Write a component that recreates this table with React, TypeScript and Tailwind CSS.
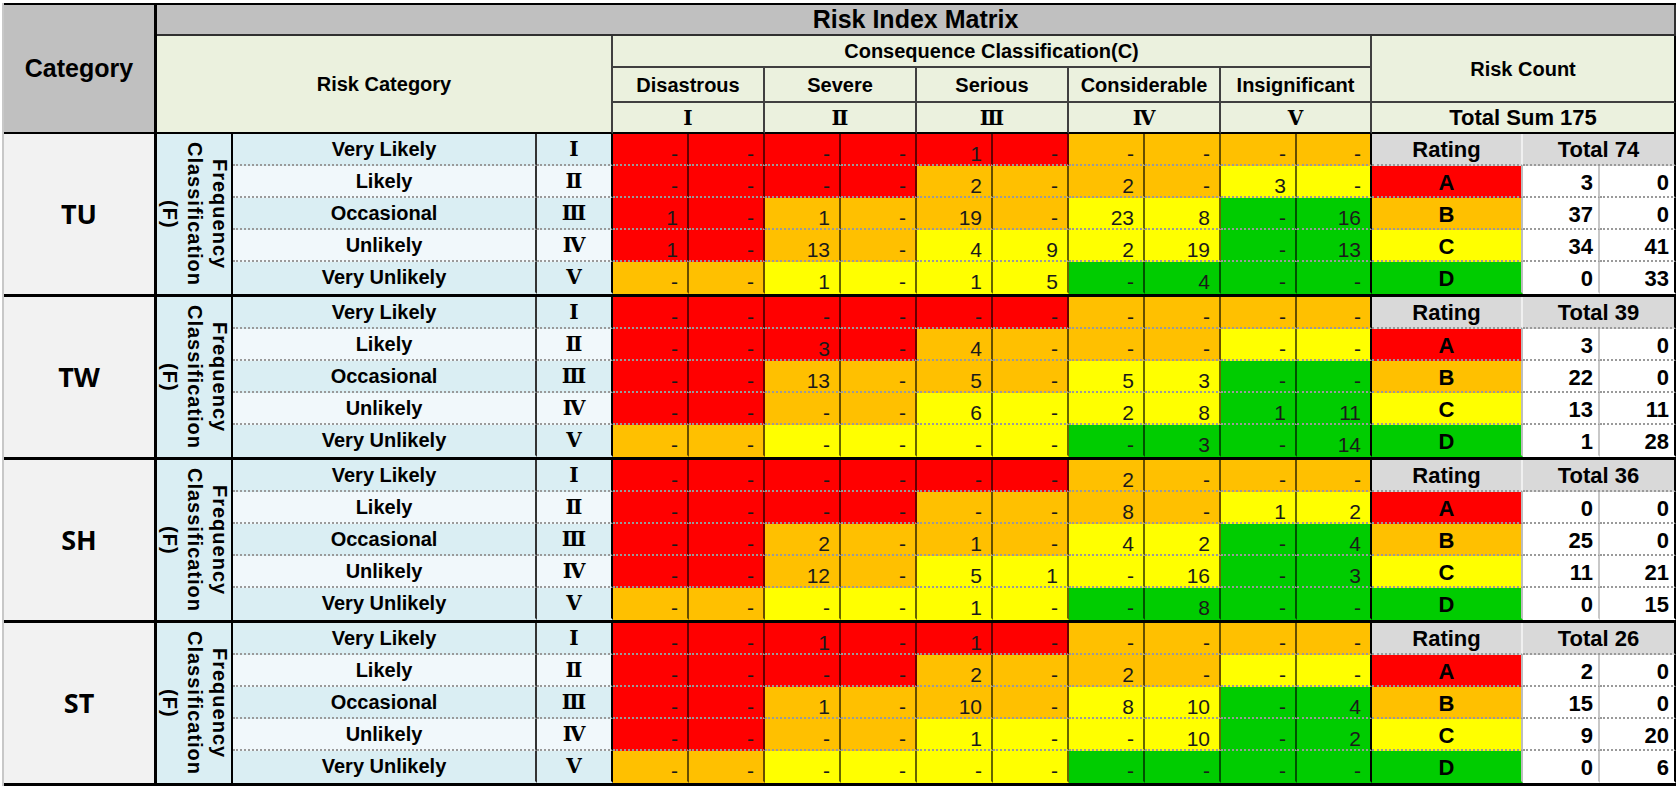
import React from 'react'

const FONT = "font-['Liberation_Sans',Arial,sans-serif]"
const ROMAN_FONT = "font-['DejaVu_Serif','Noto_Sans_CJK_KR',serif]"
const COLS = 'grid-cols-[153px_76px_304px_76px_repeat(9,76px)_75px_151px_77px_76px]'

const SEVERITY = ['Disastrous', 'Severe', 'Serious', 'Considerable', 'Insignificant']
const ROMAN = ['Ⅰ', 'Ⅱ', 'Ⅲ', 'Ⅳ', 'Ⅴ']
const FREQ = ['Very Likely', 'Likely', 'Occasional', 'Unlikely', 'Very Unlikely']

const BG: Record<string, string> = {
  r: 'bg-[#ff0000]',
  o: 'bg-[#ffc000]',
  y: 'bg-[#ffff00]',
  g: 'bg-[#00cc00]',
}

// colour of each matrix cell, same for every section
const PATTERN = ['rrrrrroooo', 'rrrrooooyy', 'rrooooyygg', 'rrooyyyygg', 'ooyyyygggg']
const RATINGS = [
  { label: 'A', bg: 'bg-[#ff0000]' },
  { label: 'B', bg: 'bg-[#ffc000]' },
  { label: 'C', bg: 'bg-[#ffff00]' },
  { label: 'D', bg: 'bg-[#00cc00]' },
]

interface Section {
  name: string
  total: number
  rows: string[][]
  counts: number[][]
}

const SECTIONS: Section[] = [
  {
    name: 'TU',
    total: 74,
    rows: [
      ['-', '-', '-', '-', '1', '-', '-', '-', '-', '-'],
      ['-', '-', '-', '-', '2', '-', '2', '-', '3', '-'],
      ['1', '-', '1', '-', '19', '-', '23', '8', '-', '16'],
      ['1', '-', '13', '-', '4', '9', '2', '19', '-', '13'],
      ['-', '-', '1', '-', '1', '5', '-', '4', '-', '-'],
    ],
    counts: [[3, 0], [37, 0], [34, 41], [0, 33]],
  },
  {
    name: 'TW',
    total: 39,
    rows: [
      ['-', '-', '-', '-', '-', '-', '-', '-', '-', '-'],
      ['-', '-', '3', '-', '4', '-', '-', '-', '-', '-'],
      ['-', '-', '13', '-', '5', '-', '5', '3', '-', '-'],
      ['-', '-', '-', '-', '6', '-', '2', '8', '1', '11'],
      ['-', '-', '-', '-', '-', '-', '-', '3', '-', '14'],
    ],
    counts: [[3, 0], [22, 0], [13, 11], [1, 28]],
  },
  {
    name: 'SH',
    total: 36,
    rows: [
      ['-', '-', '-', '-', '-', '-', '2', '-', '-', '-'],
      ['-', '-', '-', '-', '-', '-', '8', '-', '1', '2'],
      ['-', '-', '2', '-', '1', '-', '4', '2', '-', '4'],
      ['-', '-', '12', '-', '5', '1', '-', '16', '-', '3'],
      ['-', '-', '-', '-', '1', '-', '-', '8', '-', '-'],
    ],
    counts: [[0, 0], [25, 0], [11, 21], [0, 15]],
  },
  {
    name: 'ST',
    total: 26,
    rows: [
      ['-', '-', '1', '-', '1', '-', '-', '-', '-', '-'],
      ['-', '-', '-', '-', '2', '-', '2', '-', '-', '-'],
      ['-', '-', '1', '-', '10', '-', '8', '10', '-', '4'],
      ['-', '-', '-', '-', '1', '-', '-', '10', '-', '2'],
      ['-', '-', '-', '-', '-', '-', '-', '-', '-', '-'],
    ],
    counts: [[2, 0], [15, 0], [9, 20], [0, 6]],
  },
]

function Header() {
  const cell = 'flex items-center justify-center bg-[#ebf1de] border-r-2 border-b-2 border-[#404040] font-bold text-[20px] text-black'
  return (
    <div className={`grid ${COLS} grid-rows-[31px_32px_35px_31px] border-t-2 border-black`}>
      <div className="row-span-4 flex items-center justify-center bg-[#c0c0c0] border-r-[3px] border-b-2 border-black font-bold text-[25px]">
        Category
      </div>
      <div className="col-span-16 flex items-center justify-center bg-[#c0c0c0] border-b-2 border-r-2 border-[#303030] font-bold text-[25px]">
        Risk Index Matrix
      </div>
      <div className={`${cell} col-span-3 row-span-3 border-b-black`}>Risk Category</div>
      <div className={`${cell} col-span-10`}>Consequence Classification(C)</div>
      <div className={`${cell} col-span-3 row-span-2 border-r-black`}>Risk Count</div>
      {SEVERITY.map((s) => (
        <div key={s} className={`${cell} col-span-2`}>{s}</div>
      ))}
      {ROMAN.map((r) => (
        <div key={r} className={`${cell} col-span-2 border-b-black ${ROMAN_FONT} text-[20px]`}>{r}</div>
      ))}
      <div className={`${cell} col-span-3 border-b-black border-r-black text-[22px]`}>Total Sum 175</div>
    </div>
  )
}

function SectionBlock({ section }: { section: Section }) {
  // dotted row rule only on the bottom edge, the side rules stay solid
  const line = (i: number) =>
    i < 4 ? 'border-b-2 [border-bottom-style:dotted] border-b-[#9a9a9a]' : 'border-b-2 border-b-transparent'
  return (
    <div className={`grid ${COLS} grid-rows-[repeat(5,32px)] border-b-[3px] border-black`}>
      <div className="row-span-5 flex items-center justify-center bg-[#f2f2f2] border-r-[3px] border-black font-['Noto_Sans',sans-serif] font-bold text-[27px]">
        {section.name}
      </div>
      <div className="row-span-5 flex items-center justify-center bg-[#daeef3] border-r-2 border-black">
        <div className="[writing-mode:vertical-rl] text-center font-bold text-[20px] leading-[25px] tracking-[1px]">
          Frequency
          <br />
          Classification
          <br />
          (F)
        </div>
      </div>
      {section.rows.map((row, i) => {
        const tint = i % 2 === 0 ? 'bg-[#daeef3]' : 'bg-[#f1f8fb]'
        return (
          <React.Fragment key={i}>
            <div className={`flex items-center justify-center ${tint} border-r-2 border-r-[#333] ${line(i)} font-bold text-[20px]`}>
              {FREQ[i]}
            </div>
            <div className={`flex items-center justify-center ${tint} border-r-2 border-r-black ${line(i)} ${ROMAN_FONT} font-bold text-[20px]`}>
              {ROMAN[i]}
            </div>
            {row.map((v, j) => (
              <div
                key={j}
                className={`flex items-end justify-end pr-[9px] ${BG[PATTERN[i][j]]} border-r-2 ${j === 9 ? 'border-r-black' : 'border-r-black/60'} ${line(i)} text-[21px] leading-none text-[#1a1a1a]`}
              >
                {v}
              </div>
            ))}
            {i === 0 ? (
              <>
                <div className={`flex items-center justify-center bg-[#d9d9d9] border-r-2 border-r-[#f0f0f0] ${line(i)} font-bold text-[22px]`}>
                  Rating
                </div>
                <div className={`col-span-2 flex items-center justify-center bg-[#d9d9d9] border-r-2 border-r-black ${line(i)} font-bold text-[22px]`}>
                  Total {section.total}
                </div>
              </>
            ) : (
              <>
                <div className={`flex items-end justify-center pb-[2px] ${RATINGS[i - 1].bg} border-r-2 border-r-[#bdbdbd] ${line(i)} font-bold text-[22px] leading-none`}>
                  {RATINGS[i - 1].label}
                </div>
                <div className={`flex items-end justify-end pr-[5px] pb-[2px] bg-white border-r-2 border-r-[#c8c8c8] ${line(i)} font-bold text-[22px] leading-none`}>
                  {section.counts[i - 1][0]}
                </div>
                <div className={`flex items-end justify-end pr-[5px] pb-[2px] bg-white border-r-2 border-r-black ${line(i)} font-bold text-[22px] leading-none`}>
                  {section.counts[i - 1][1]}
                </div>
              </>
            )}
          </React.Fragment>
        )
      })}
    </div>
  )
}

export default function App() {
  return (
    <div className={`w-[1679px] h-[792px] bg-white pt-[3px] pl-[2px] overflow-hidden ${FONT} text-black`}>
      <div className="w-[1674px] border-l-2 border-[#c8c8c8]">
        <Header />
        {SECTIONS.map((s) => (
          <SectionBlock key={s.name} section={s} />
        ))}
      </div>
    </div>
  )
}
